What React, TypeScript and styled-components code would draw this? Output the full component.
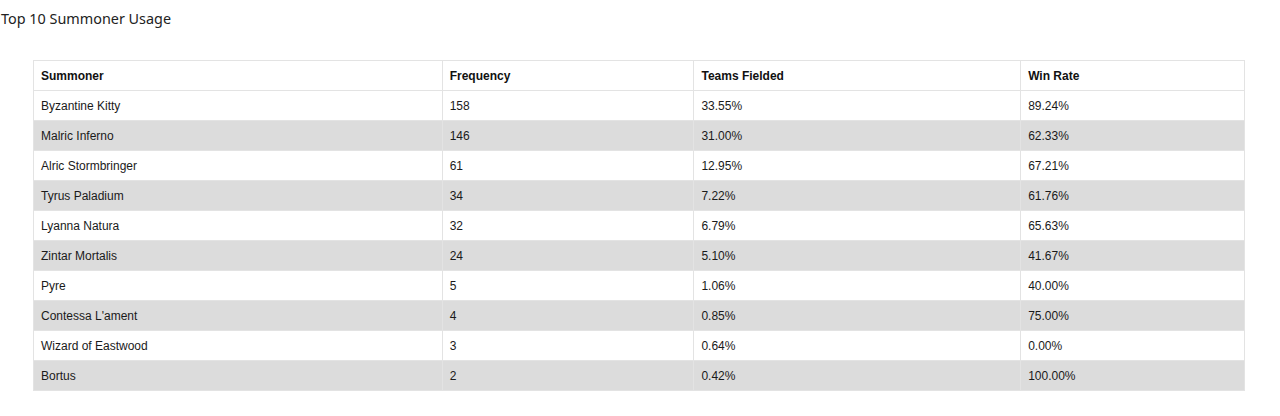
import React from 'react';
import styled, { createGlobalStyle } from 'styled-components';

const GlobalStyle = createGlobalStyle`
  html, body {
    margin: 0;
    padding: 0;
    background: #ffffff;
  }
`;

const Page = styled.div`
  padding: 8px 0 0 0;
`;

const Title = styled.h3`
  margin: 0;
  padding-left: 1px;
  font-family: "Noto Sans", "Open Sans", sans-serif;
  font-size: 14.4px;
  font-weight: 400;
  line-height: 22px;
  color: #222;
`;

const Table = styled.table`
  margin: 30px 0 0 33px;
  width: 1212px;
  border-collapse: collapse;
  font-family: "Liberation Sans", Arial, sans-serif;
  font-size: 12px;
  color: #111;
`;

const HeadCell = styled.th<{ $width: number }>`
  width: ${props => props.$width}px;
  height: 30px;
  padding: 0 7px;
  text-align: left;
  font-weight: bold;
  border: 1px solid #e3e3e3;
  box-sizing: border-box;
  color: #111;
`;

const Row = styled.tr<{ $shaded: boolean }>`
  background-color: ${props => (props.$shaded ? '#dcdcdc' : '#ffffff')};
`;

const Cell = styled.td`
  height: 30px;
  padding: 0 7px;
  border: 1px solid #e3e3e3;
  box-sizing: border-box;
  color: #1a1a1a;
`;

const columns = [
  { label: 'Summoner', width: 409 },
  { label: 'Frequency', width: 252 },
  { label: 'Teams Fielded', width: 327 },
  { label: 'Win Rate', width: 224 },
];

const rows = [
  ['Byzantine Kitty', '158', '33.55%', '89.24%'],
  ['Malric Inferno', '146', '31.00%', '62.33%'],
  ['Alric Stormbringer', '61', '12.95%', '67.21%'],
  ['Tyrus Paladium', '34', '7.22%', '61.76%'],
  ['Lyanna Natura', '32', '6.79%', '65.63%'],
  ['Zintar Mortalis', '24', '5.10%', '41.67%'],
  ['Pyre', '5', '1.06%', '40.00%'],
  ["Contessa L'ament", '4', '0.85%', '75.00%'],
  ['Wizard of Eastwood', '3', '0.64%', '0.00%'],
  ['Bortus', '2', '0.42%', '100.00%'],
];

const App: React.FC = () => {
  return (
    <>
      <GlobalStyle />
      <Page>
        <Title>Top 10 Summoner Usage</Title>
        <Table>
          <thead>
            <tr>
              {columns.map(col => (
                <HeadCell key={col.label} $width={col.width}>
                  {col.label}
                </HeadCell>
              ))}
            </tr>
          </thead>
          <tbody>
            {rows.map((row, i) => (
              <Row key={row[0]} $shaded={i % 2 === 1}>
                {row.map((value, j) => (
                  <Cell key={j}>{value}</Cell>
                ))}
              </Row>
            ))}
          </tbody>
        </Table>
      </Page>
    </>
  );
};

export default App;
